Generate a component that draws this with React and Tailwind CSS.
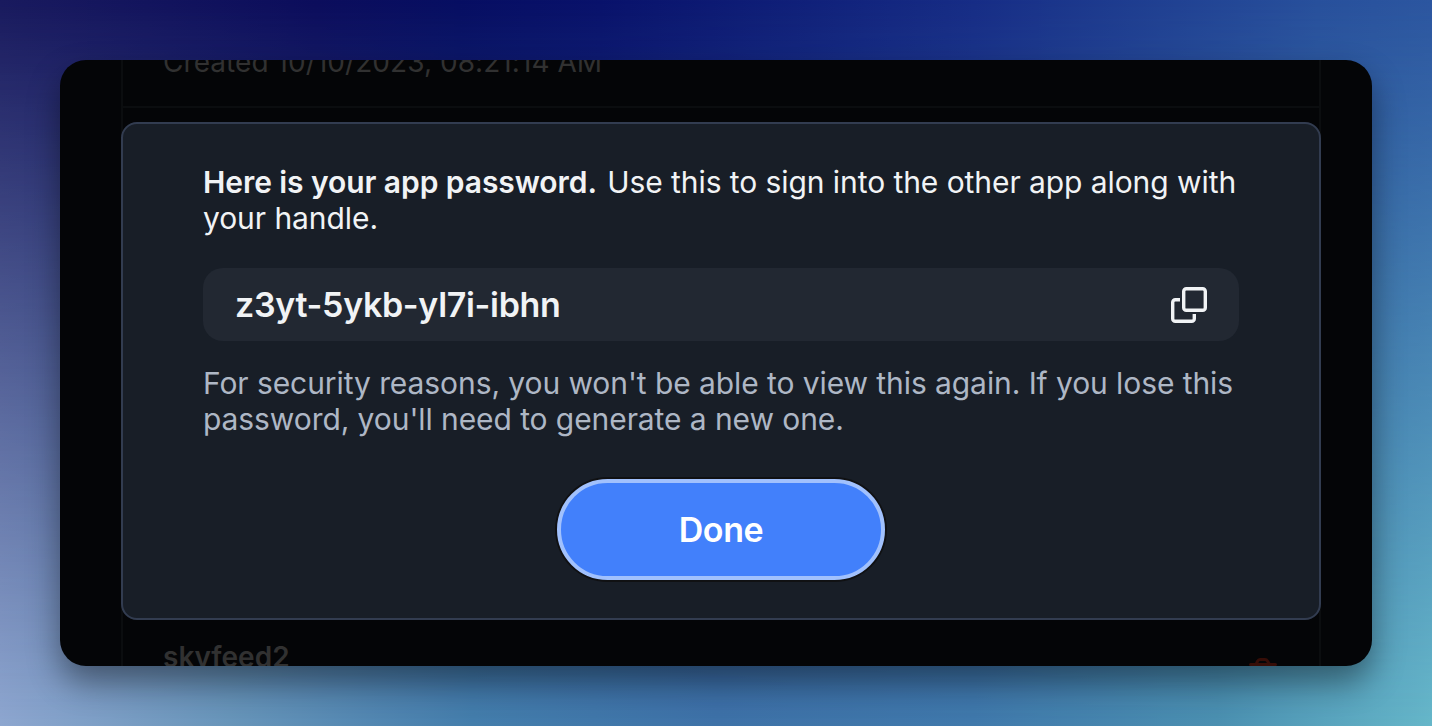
import React from "react";

function CopyIcon() {
  return (
    <svg width="36" height="36" viewBox="0 0 36 36" fill="none" stroke="#f1f3f5" strokeWidth="3.4" strokeLinejoin="round">
      <rect x="12.7" y="1.7" width="21.6" height="21.6" rx="2.6" />
      <path d="M9 12.7H4.3a2.6 2.6 0 0 0-2.6 2.6v16.4a2.6 2.6 0 0 0 2.6 2.6h16.4a2.6 2.6 0 0 0 2.6-2.6V27" />
    </svg>
  );
}

function TrashIcon() {
  return (
    <svg className="shrink-0" width="28" height="32" viewBox="0 0 28 32" fill="none" stroke="#360d07" strokeWidth="3" strokeLinecap="round" strokeLinejoin="round">
      <path d="M1.500 6.500H26.500M7.500 5.500L8.600 3.200Q9.400 1.500 11 1.500H16Q17.600 1.500 18.600 3.200L20 5.500M4 7L5.500 28Q5.700 30 7.500 30H20.500Q22.300 30 22.500 28L24 7" />
    </svg>
  );
}

function PageBehind() {
  return (
    <div className="ml-[61px] flex h-[606px] w-[1200px] flex-col border-x-2 border-[#0b0d0f] text-[#313131]">
      <div className="flex h-12 items-end border-b-2 border-[#0b0d0f] pb-[26px] pl-10">
        <span className="text-[28px] leading-9 tracking-[0.06px]">Created 10/10/2023, 08:21:14 AM</span>
      </div>
      <div className="mt-auto flex h-[27px] items-start justify-between pl-10 pr-[42px]">
        <span className="text-[28px] leading-9 font-semibold">skyfeed2</span>
        <div className="pt-[19px]"><TrashIcon /></div>
      </div>
    </div>
  );
}

export default function App() {
  return (
    <main className="relative h-[726px] w-[1432px] overflow-hidden bg-[linear-gradient(90deg,#191a5e_0%,#0c0d5c_22%,#070e62_32%,#09126b_42%,#172d86_68%,#28509c_92%,#2c56a0_100%)] p-[60px] font-['Inter',sans-serif]">
      <div className="absolute inset-0 bg-[linear-gradient(90deg,#8ea7d0_0%,#6896ba_16%,#447eac_33%,#3e72a8_50%,#4079ab_68%,#4b90b0_85%,#66b7c9_100%)] [mask-image:linear-gradient(180deg,transparent,black)]" />
      <section className="relative h-[606px] overflow-hidden rounded-[26px] bg-[#040507] shadow-[0_16px_32px_rgba(0,0,0,0.42)]">
        <PageBehind />
        <div className="absolute top-[62px] left-[61px] flex h-[498px] w-[1200px] flex-col rounded-2xl border-2 border-[#323c50] bg-[#181e27] px-20 pt-10">
          <p className="text-[30px] leading-9 tracking-[-0.07px] text-[#f1f3f5]">
            <strong className="mr-[2px] font-semibold">Here is your app password.</strong> Use this to sign into the other app along with your handle.
          </p>
          <div className="mt-8 flex h-[73px] shrink-0 items-center justify-between rounded-[20px] bg-[#222832] px-8 text-[#f1f3f5]">
            <span className="text-[34px] leading-10 font-semibold tracking-[-0.32px]">z3yt-5ykb-yl7i-ibhn</span>
            <button aria-label="Copy"><CopyIcon /></button>
          </div>
          <p className="mt-6 text-[30px] leading-9 tracking-[-0.08px] text-[#aeb7c5]">
            For security reasons, you won't be able to view this again. If you lose this password, you'll need to generate a new one.
          </p>
          <button className="mt-[42px] h-[101px] w-[328px] shrink-0 self-center rounded-full border-4 border-[#a1c1fd] bg-[#4280fb] pb-px text-[34px] font-semibold tracking-[-0.4px] text-white shadow-[0_0_0_2px_#101113]">Done</button>
        </div>
      </section>
    </main>
  );
}
